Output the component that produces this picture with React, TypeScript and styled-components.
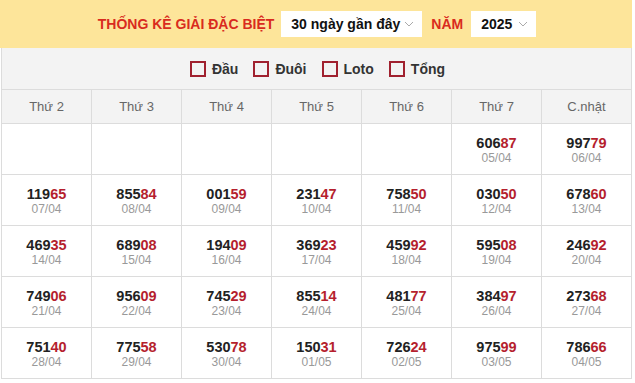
import React from "react";
import styled, { createGlobalStyle } from "styled-components";

const Global = createGlobalStyle`
  html, body { margin: 0; padding: 0; background: #fff; }
  body { font-family: "Liberation Sans", Arial, sans-serif; }
`;

const Wrap = styled.div`
  width: 632px;
`;

const TopBar = styled.div`
  height: 48px;
  background: #fde59a;
  display: flex;
  align-items: center;
  justify-content: center;
  padding-left: 2px;
`;

const Title = styled.span<{ $ml?: number; $mr?: number }>`
  color: #d92b1e;
  font-weight: bold;
  font-size: 14px;
  margin-left: ${(p) => p.$ml ?? 0}px;
  margin-right: ${(p) => p.$mr ?? 0}px;
`;

const Select = styled.div<{ $w: number }>`
  width: ${(p) => p.$w}px;
  height: 26px;
  background: #fff;
  display: flex;
  align-items: center;
  justify-content: space-between;
  padding: 0 8px 0 10px;
  box-sizing: border-box;
  font-weight: bold;
  font-size: 14px;
  color: #111;
`;

const FilterBar = styled.div`
  height: 41px;
  background: #f3f3f3;
  border: 1px solid #dcdcdc;
  border-top: none;
  border-bottom: none;
  margin-left: 1px;
  display: flex;
  align-items: center;
  justify-content: center;
  gap: 15px;
  padding-left: 2px;
`;

const Check = styled.label`
  display: flex;
  align-items: center;
  gap: 6px;
  font-weight: bold;
  font-size: 14px;
  color: #333;
`;

const Box = styled.span`
  width: 12px;
  height: 12px;
  border: 2px solid #a0212f;
  display: inline-block;
`;

const Table = styled.div`
  margin-left: 1px;
  display: grid;
  grid-template-columns: repeat(7, 90px);
  border-left: 1px solid #dcdcdc;
  width: 631px;
  box-sizing: border-box;
`;

const Head = styled.div`
  height: 35px;
  background: #f3f3f3;
  border-right: 1px solid #dcdcdc;
  border-top: 1px solid #dcdcdc;
  border-bottom: 1px solid #dcdcdc;
  box-sizing: border-box;
  display: flex;
  align-items: center;
  justify-content: center;
  font-size: 13px;
  color: #666;
`;

const Cell = styled.div`
  height: 51px;
  border-right: 1px solid #dcdcdc;
  border-bottom: 1px solid #dcdcdc;
  box-sizing: border-box;
  display: flex;
  flex-direction: column;
  align-items: center;
  justify-content: center;
  padding-top: 3px;
`;

const Num = styled.div`
  font-weight: bold;
  font-size: 14.5px;
  color: #222;
  line-height: 16px;
`;

const Red = styled.span`
  color: #b51f2e;
`;

const DateText = styled.div`
  font-size: 12px;
  color: #999;
  line-height: 15px;
`;

const Chevron = () => (
  <svg width="10" height="6" viewBox="0 0 10 6">
    <path d="M1 1 L5 5 L9 1" fill="none" stroke="#aaa" strokeWidth="1" />
  </svg>
);

const heads = ["Thứ 2", "Thứ 3", "Thứ 4", "Thứ 5", "Thứ 6", "Thứ 7", "C.nhật"];

const data: ([string, string] | null)[] = [
  null, null, null, null, null, ["60687", "05/04"], ["99779", "06/04"],
  ["11965", "07/04"], ["85584", "08/04"], ["00159", "09/04"], ["23147", "10/04"], ["75850", "11/04"], ["03050", "12/04"], ["67860", "13/04"],
  ["46935", "14/04"], ["68908", "15/04"], ["19409", "16/04"], ["36923", "17/04"], ["45992", "18/04"], ["59508", "19/04"], ["24692", "20/04"],
  ["74906", "21/04"], ["95609", "22/04"], ["74529", "23/04"], ["85514", "24/04"], ["48177", "25/04"], ["38497", "26/04"], ["27368", "27/04"],
  ["75140", "28/04"], ["77558", "29/04"], ["53078", "30/04"], ["15031", "01/05"], ["72624", "02/05"], ["97599", "03/05"], ["78666", "04/05"],
];

export default function App() {
  return (
    <Wrap>
      <Global />
      <TopBar>
        <Title $mr={7}>THỐNG KÊ GIẢI ĐẶC BIỆT</Title>
        <Select $w={141}>
          30 ngày gần đây <Chevron />
        </Select>
        <Title $ml={9} $mr={8}>NĂM</Title>
        <Select $w={65}>
          2025 <Chevron />
        </Select>
      </TopBar>
      <FilterBar>
        {["Đầu", "Đuôi", "Loto", "Tổng"].map((t) => (
          <Check key={t}>
            <Box />
            {t}
          </Check>
        ))}
      </FilterBar>
      <Table>
        {heads.map((h) => (
          <Head key={h}>{h}</Head>
        ))}
        {data.map((d, i) => (
          <Cell key={i}>
            {d && (
              <>
                <Num>
                  {d[0].slice(0, 3)}
                  <Red>{d[0].slice(3)}</Red>
                </Num>
                <DateText>{d[1]}</DateText>
              </>
            )}
          </Cell>
        ))}
      </Table>
    </Wrap>
  );
}
